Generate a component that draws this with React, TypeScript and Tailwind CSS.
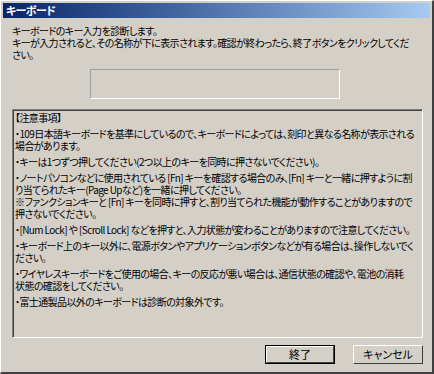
import React from "react";

const font = {
  fontFamily: '"Noto Sans CJK JP", "Noto Sans", sans-serif',
  fontFeatureSettings: '"palt"',
};

const notes: string[][] = [
  [
    "・109日本語キーボードを基準にしているので、キーボードによっては、刻印と異なる名称が表示される",
    "場合があります。",
  ],
  ["・キーは1つずつ押してください(2つ以上のキーを同時に押さないでください)。"],
  [
    "・ノートパソコンなどに使用されている [Fn] キーを確認する場合のみ、[Fn] キーと一緒に押すように割",
    "り当てられたキー(Page Upなど)を一緒に押してください。",
    "※ファンクションキーと [Fn] キーを同時に押すと、割り当てられた機能が動作することがありますので",
    "押さないでください。",
  ],
  ["・[Num Lock] や [Scroll Lock] などを押すと、入力状態が変わることがありますので注意してください。"],
  [
    "・キーボード上のキー以外に、電源ボタンやアプリケーションボタンなどが有る場合は、操作しないでく",
    "ださい。",
  ],
  [
    "・ワイヤレスキーボードをご使用の場合、キーの反応が悪い場合は、通信状態の確認や、電池の消耗",
    "状態の確認をしてください。",
  ],
  ["・富士通製品以外のキーボードは診断の対象外です。"],
];

function Button({ label, primary }: { label: string; primary?: boolean }) {
  return (
    <div
      className={`w-[70px] h-[19px] ${primary ? "border border-black" : ""}`}
    >
      <div className="w-full h-full border-t border-l border-white border-r border-b border-r-[#404040] border-b-[#404040] bg-[#d4d0c8] flex items-center justify-center text-[11px] leading-none text-black">
        {label}
      </div>
    </div>
  );
}

export default function App() {
  return (
    <div
      className="w-[434px] h-[374px] bg-[#d4d0c8] border-t border-l border-t-white border-l-white border-r-2 border-b-2 border-r-[#404040] border-b-[#404040] flex flex-col text-black overflow-hidden"
      style={font}
    >
      <div className="mx-[2px] mt-[2px] h-[15px] bg-gradient-to-r from-[#0a246a] to-[#a6caf0] flex items-center px-[3px]">
        <span className="text-white font-bold text-[11px] leading-none tracking-[-0.5px]">
          キーボード
        </span>
      </div>

      <div className="pl-[11px] mt-[7px] text-[10px] leading-[12px] tracking-[-0.6px] whitespace-nowrap">
        <div>キーボードのキー入力を診断します。</div>
        <div>
          キーが入力されると、その名称が下に表示されます。確認が終わったら、終了ボタンをクリックしてくだ
        </div>
        <div>さい。</div>
      </div>

      <div className="ml-[89px] mt-[8px] w-[250px] h-[30px] border-t border-l border-t-[#a0a0a0] border-l-[#a0a0a0] border-r border-b border-r-white border-b-white" />

      <div className="ml-[11px] mt-[10px] w-[411px] h-[229px] border-t border-l border-t-[#808080] border-l-[#808080] border-r border-b border-r-white border-b-white">
        <div className="w-full h-full border-t border-l border-t-[#404040] border-l-[#404040] pl-[1px] pt-[1px] text-[10px] leading-[12px] tracking-[-0.6px] whitespace-nowrap overflow-hidden">
          <div>【注意事項】</div>
          {notes.map((p, i) => (
            <div key={i} className="mt-[4px]">
              {p.map((line, j) => (
                <div key={j}>{line}</div>
              ))}
            </div>
          ))}
        </div>
      </div>

      <div className="flex justify-end gap-[18px] mt-[7px] pr-[9px]">
        <Button label="終了" primary />
        <Button label="キャンセル" />
      </div>
    </div>
  );
}
